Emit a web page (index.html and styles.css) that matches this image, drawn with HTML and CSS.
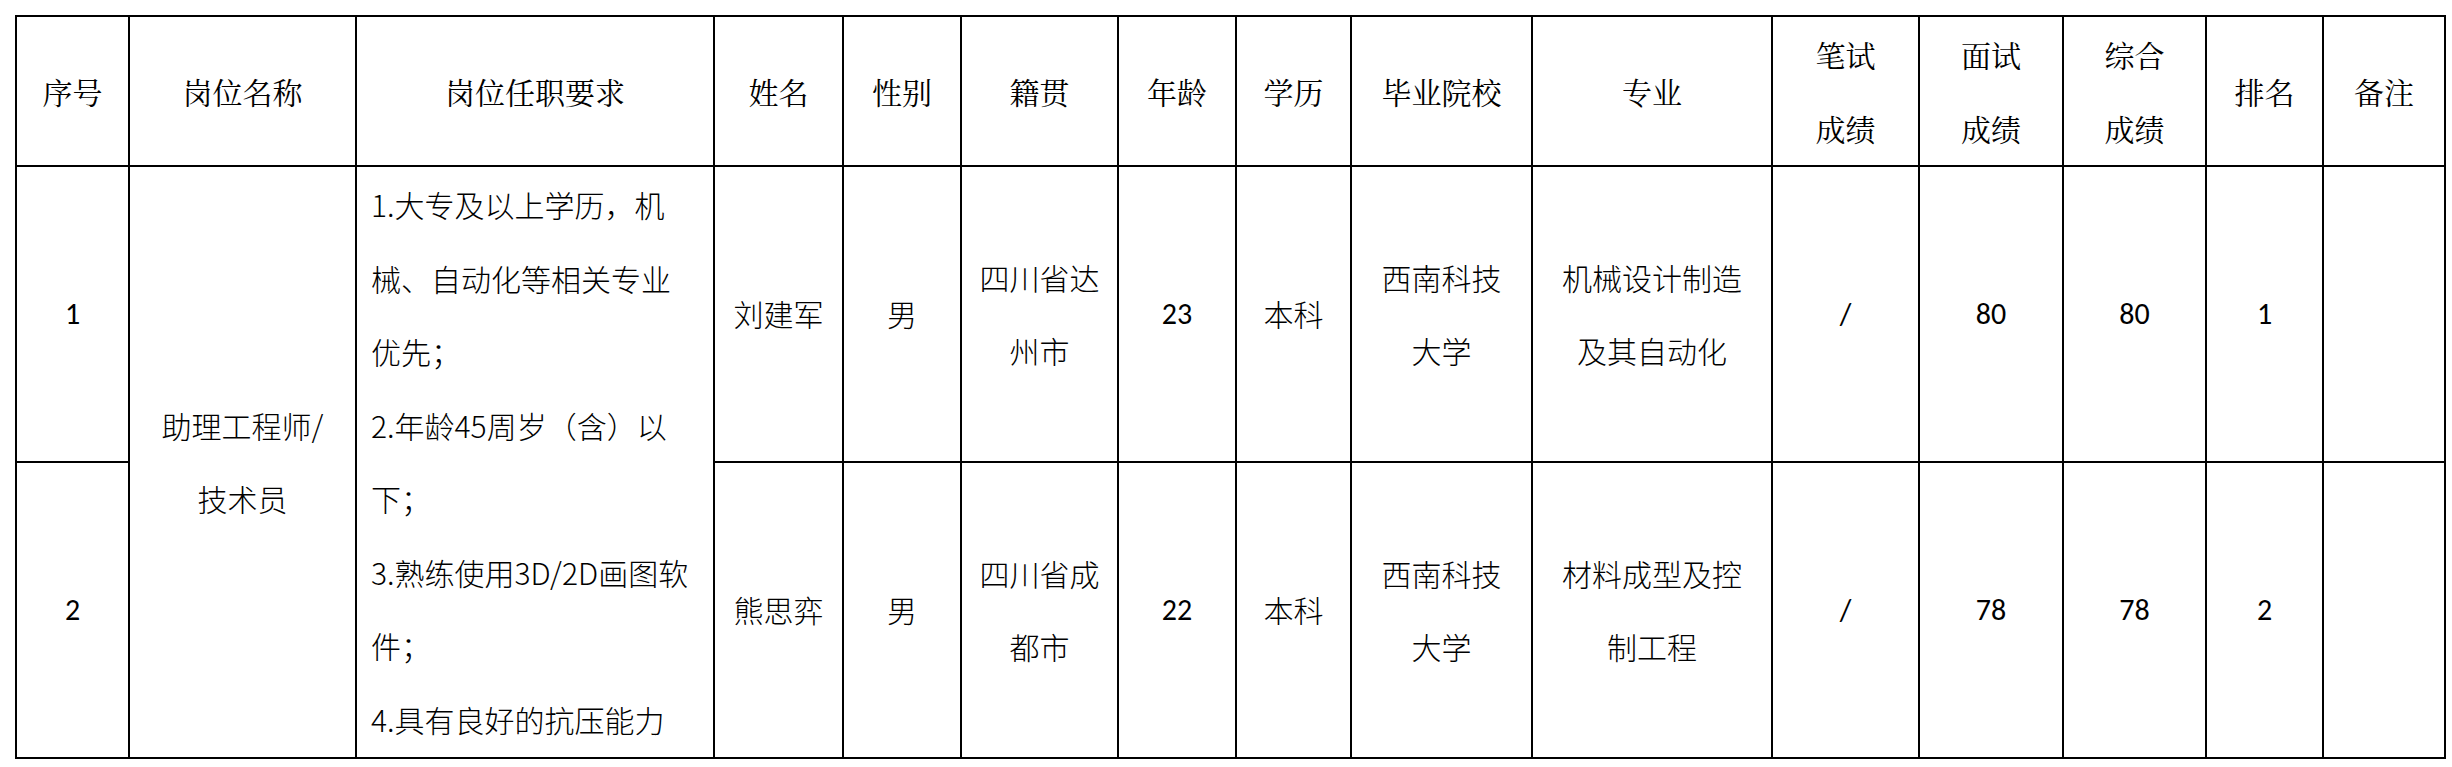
FILE: index.html
```html
<!DOCTYPE html>
<html lang="zh-CN">
<head>
<meta charset="utf-8">
<title>面试成绩表</title>
<link rel="stylesheet" href="styles.css">
</head>
<body>
<table class="sheet">
  <tr class="head">
    <th class="w1">序号</th>
    <th class="w2">岗位名称</th>
    <th class="w3">岗位任职要求</th>
    <th class="w4">姓名</th>
    <th class="w5">性别</th>
    <th class="w6">籍贯</th>
    <th class="w7">年龄</th>
    <th class="w8">学历</th>
    <th class="w9">毕业院校</th>
    <th class="w10">专业</th>
    <th class="w11">笔试<br>成绩</th>
    <th class="w12">面试<br>成绩</th>
    <th class="w13">综合<br>成绩</th>
    <th class="w14">排名</th>
    <th class="w15">备注</th>
  </tr>
  <tr class="row">
    <td class="num">1</td>
    <td rowspan="2" class="post">助理工程师/<br>技术员</td>
    <td rowspan="2" class="req">1.大专及以上学历，机<br>械、自动化等相关专业<br>优先；<br>2.年龄45周岁（含）以<br>下；<br>3.熟练使用3D/2D画图软<br>件；<br>4.具有良好的抗压能力</td>
    <td>刘建军</td>
    <td>男</td>
    <td>四川省达<br>州市</td>
    <td class="num">23</td>
    <td>本科</td>
    <td>西南科技<br>大学</td>
    <td>机械设计制造<br>及其自动化</td>
    <td class="num">/</td>
    <td class="num">80</td>
    <td class="num">80</td>
    <td class="num">1</td>
    <td></td>
  </tr>
  <tr class="row">
    <td class="num">2</td>
    <td>熊思弈</td>
    <td>男</td>
    <td>四川省成<br>都市</td>
    <td class="num">22</td>
    <td>本科</td>
    <td>西南科技<br>大学</td>
    <td>材料成型及控<br>制工程</td>
    <td class="num">/</td>
    <td class="num">78</td>
    <td class="num">78</td>
    <td class="num">2</td>
    <td></td>
  </tr>
</table>
</body>
</html>
```

FILE: styles.css
```css
html, body {
  margin: 0;
  padding: 0;
  background: #fff;
}

.sheet {
  margin: 15px 0 0 15px;
  border-collapse: separate;
  border-spacing: 0;
  table-layout: fixed;
  width: 2431px;
  border-left: 2px solid #000;
  border-top: 2px solid #000;
}

.sheet th,
.sheet td {
  box-sizing: border-box;
  border-right: 2px solid #000;
  border-bottom: 2px solid #000;
  padding: 0;
  text-align: center;
  vertical-align: middle;
  color: #000;
  white-space: nowrap;
  overflow: hidden;
}

.sheet th {
  font-family: "Noto Serif CJK SC", "AR PL UMing CN", "Noto Sans CJK SC", serif;
  font-weight: normal;
  font-size: 30px;
  line-height: 74px;
}

.sheet td {
  font-family: "Noto Sans CJK SC", sans-serif;
  font-weight: 300;
  font-size: 30px;
  line-height: 73.5px;
}

.sheet td.num {
  font-family: "Carlito", "Noto Sans CJK SC", sans-serif;
  font-weight: 400;
}

.head { height: 150px; }
.row { height: 296px; }

.sheet td.req {
  text-align: left;
  padding-left: 14px;
}

.w1 { width: 113px; }
.w2 { width: 227px; }
.w3 { width: 358px; }
.w4 { width: 129px; }
.w5 { width: 118px; }
.w6 { width: 157px; }
.w7 { width: 118px; }
.w8 { width: 115px; }
.w9 { width: 181px; }
.w10 { width: 240px; }
.w11 { width: 147px; }
.w12 { width: 144px; }
.w13 { width: 143px; }
.w14 { width: 117px; }
.w15 { width: 122px; }
```
